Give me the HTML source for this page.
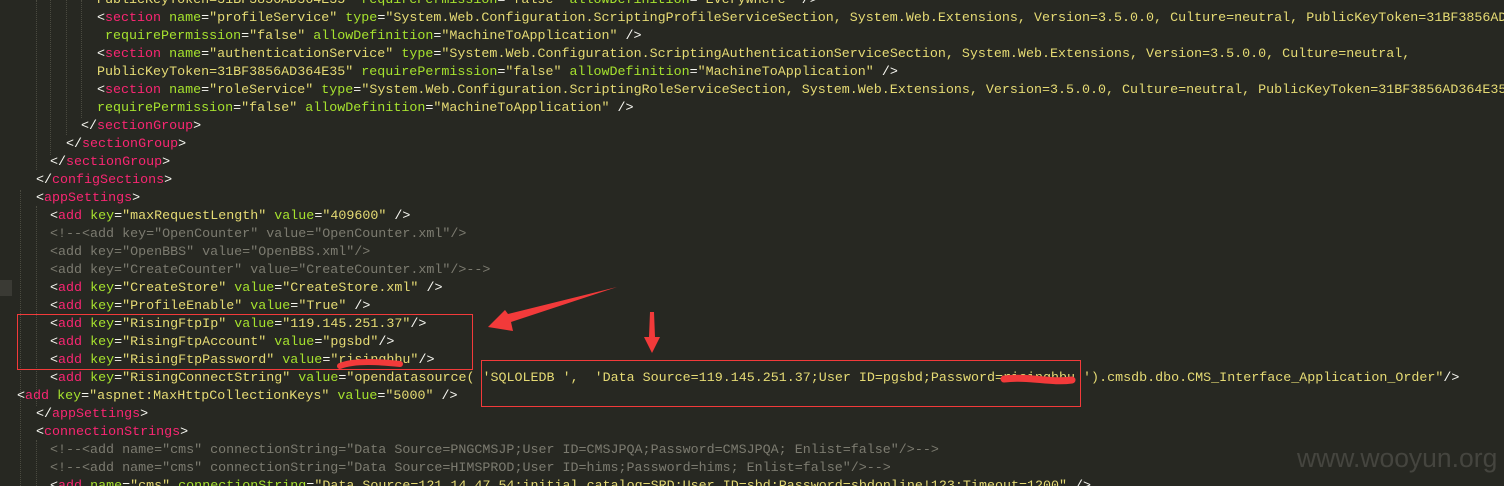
<!DOCTYPE html>
<html><head><meta charset="utf-8">
<style>
html,body{margin:0;padding:0;overflow:hidden;width:1504px;height:486px}
body{background:#272822;font-family:"Liberation Mono",monospace;font-size:13.35px}
#w{position:relative;width:1504px;height:486px;overflow:hidden}
.l{position:absolute;height:18px;line-height:18px;white-space:pre;color:#f8f8f2}
.n{color:#f92672}.a{color:#a6e22e}.s{color:#e6db74}.c{color:#7c7b70}
.g{position:absolute;top:0;width:0;border-left:1px dotted #4a4a40}
.box{position:absolute;border:1px solid #f23a3a}
.wm{position:absolute;left:1297px;top:443px;font-family:"Liberation Sans",sans-serif;font-size:26.5px;color:#45453f}
</style></head><body><div id="w">
<div class="g" style="left:20px;top:190px;height:296px"></div>
<div class="g" style="left:36px;height:170px"></div>
<div class="g" style="left:50px;height:155px"></div>
<div class="g" style="left:66px;height:135px"></div>
<div class="g" style="left:81px;height:118px"></div>
<div class="g" style="left:36px;top:206px;height:200px"></div>
<div class="g" style="left:36px;top:440px;height:46px"></div>
<div style="position:absolute;left:0;top:280px;width:12px;height:16px;background:#3a3a34"></div>

<div class="l s" style="left:97px;top:-8px">PublicKeyToken=31BF3856AD364E35" <span class="a">requirePermission</span><span style="color:#f8f8f2">=</span>"false" <span class="a">allowDefinition</span><span style="color:#f8f8f2">=</span>"Everywhere" <span style="color:#f8f8f2">/&gt;</span></div>
<div class="l" style="left:97px;top:10px">&lt;<span class="n">section</span> <span class="a">name</span>=<span class="s">"profileService"</span> <span class="a">type</span>=<span class="s">"System.Web.Configuration.ScriptingProfileServiceSection, System.Web.Extensions, Version=3.5.0.0, Culture=neutral, PublicKeyToken=31BF3856AD364E35"</span></div>
<div class="l" style="left:105px;top:28px"><span class="a">requirePermission</span>=<span class="s">"false"</span> <span class="a">allowDefinition</span>=<span class="s">"MachineToApplication"</span> /&gt;</div>
<div class="l" style="left:97px;top:46px">&lt;<span class="n">section</span> <span class="a">name</span>=<span class="s">"authenticationService"</span> <span class="a">type</span>=<span class="s">"System.Web.Configuration.ScriptingAuthenticationServiceSection, System.Web.Extensions, Version=3.5.0.0, Culture=neutral,</span></div>
<div class="l" style="left:97px;top:64px"><span class="s">PublicKeyToken=31BF3856AD364E35"</span> <span class="a">requirePermission</span>=<span class="s">"false"</span> <span class="a">allowDefinition</span>=<span class="s">"MachineToApplication"</span> /&gt;</div>
<div class="l" style="left:97px;top:82px">&lt;<span class="n">section</span> <span class="a">name</span>=<span class="s">"roleService"</span> <span class="a">type</span>=<span class="s">"System.Web.Configuration.ScriptingRoleServiceSection, System.Web.Extensions, Version=3.5.0.0, Culture=neutral, PublicKeyToken=31BF3856AD364E35"</span></div>
<div class="l" style="left:97px;top:100px"><span class="a">requirePermission</span>=<span class="s">"false"</span> <span class="a">allowDefinition</span>=<span class="s">"MachineToApplication"</span> /&gt;</div>
<div class="l" style="left:81px;top:118px">&lt;/<span class="n">sectionGroup</span>&gt;</div>
<div class="l" style="left:66px;top:136px">&lt;/<span class="n">sectionGroup</span>&gt;</div>
<div class="l" style="left:50px;top:154px">&lt;/<span class="n">sectionGroup</span>&gt;</div>
<div class="l" style="left:36px;top:172px">&lt;/<span class="n">configSections</span>&gt;</div>
<div class="l" style="left:36px;top:190px">&lt;<span class="n">appSettings</span>&gt;</div>
<div class="l" style="left:50px;top:208px">&lt;<span class="n">add</span> <span class="a">key</span>=<span class="s">"maxRequestLength"</span> <span class="a">value</span>=<span class="s">"409600"</span> /&gt;</div>
<div class="l c" style="left:50px;top:226px">&lt;!--&lt;add key="OpenCounter" value="OpenCounter.xml"/&gt;</div>
<div class="l c" style="left:50px;top:244px">&lt;add key="OpenBBS" value="OpenBBS.xml"/&gt;</div>
<div class="l c" style="left:50px;top:262px">&lt;add key="CreateCounter" value="CreateCounter.xml"/&gt;--&gt;</div>
<div class="l" style="left:50px;top:280px">&lt;<span class="n">add</span> <span class="a">key</span>=<span class="s">"CreateStore"</span> <span class="a">value</span>=<span class="s">"CreateStore.xml"</span> /&gt;</div>
<div class="l" style="left:50px;top:298px">&lt;<span class="n">add</span> <span class="a">key</span>=<span class="s">"ProfileEnable"</span> <span class="a">value</span>=<span class="s">"True"</span> /&gt;</div>
<div class="l" style="left:50px;top:316px">&lt;<span class="n">add</span> <span class="a">key</span>=<span class="s">"RisingFtpIp"</span> <span class="a">value</span>=<span class="s">"119.145.251.37"</span>/&gt;</div>
<div class="l" style="left:50px;top:334px">&lt;<span class="n">add</span> <span class="a">key</span>=<span class="s">"RisingFtpAccount"</span> <span class="a">value</span>=<span class="s">"pgsbd"</span>/&gt;</div>
<div class="l" style="left:50px;top:352px">&lt;<span class="n">add</span> <span class="a">key</span>=<span class="s">"RisingFtpPassword"</span> <span class="a">value</span>=<span class="s">"risinghbu"</span>/&gt;</div>
<div class="l" style="left:50px;top:370px">&lt;<span class="n">add</span> <span class="a">key</span>=<span class="s">"RisingConnectString"</span> <span class="a">value</span>=<span class="s">"opendatasource( 'SQLOLEDB ',  'Data Source=119.145.251.37;User ID=pgsbd;Password=risinghbu ').cmsdb.dbo.CMS_Interface_Application_Order"</span>/&gt;</div>
<div class="l" style="left:17px;top:388px">&lt;<span class="n">add</span> <span class="a">key</span>=<span class="s">"aspnet:MaxHttpCollectionKeys"</span> <span class="a">value</span>=<span class="s">"5000"</span> /&gt;</div>
<div class="l" style="left:36px;top:406px">&lt;/<span class="n">appSettings</span>&gt;</div>
<div class="l" style="left:36px;top:424px">&lt;<span class="n">connectionStrings</span>&gt;</div>
<div class="l c" style="left:50px;top:442px">&lt;!--&lt;add name="cms" connectionString="Data Source=PNGCMSJP;User ID=CMSJPQA;Password=CMSJPQA; Enlist=false"/&gt;--&gt;</div>
<div class="l c" style="left:50px;top:460px">&lt;!--&lt;add name="cms" connectionString="Data Source=HIMSPROD;User ID=hims;Password=hims; Enlist=false"/&gt;--&gt;</div>
<div class="l" style="left:50px;top:478px">&lt;<span class="n">add</span> <span class="a">name</span>=<span class="s">"cms"</span> <span class="a">connectionString</span>=<span class="s">"Data Source=121.14.47.54;initial catalog=SRD;User ID=sbd;Password=sbdonline!123;Timeout=1200"</span> /&gt;</div>

<div class="box" style="left:17px;top:314px;width:454px;height:54px"></div>
<div class="box" style="left:481px;top:360px;width:598px;height:45px"></div>

<svg style="position:absolute;left:0;top:0" width="1504" height="486">
<path d="M617,287 L511,322 L513,331 L488,327 L505,310 L508,314 Z" fill="#f23a3a"/>
<path d="M650,312 L654,312 L655,337 L660,337 L652,353 L644,337 L649,337 Z" fill="#f23a3a"/>
<path d="M340,366 C355,360 380,362 400,364" stroke="#f23a3a" stroke-width="6" fill="none" stroke-linecap="round"/>
<path d="M1004,379 C1030,376 1050,383 1072,380" stroke="#f23a3a" stroke-width="7" fill="none" stroke-linecap="round"/>
</svg>
<div class="wm">www.wooyun.org</div>
</div></body></html>
